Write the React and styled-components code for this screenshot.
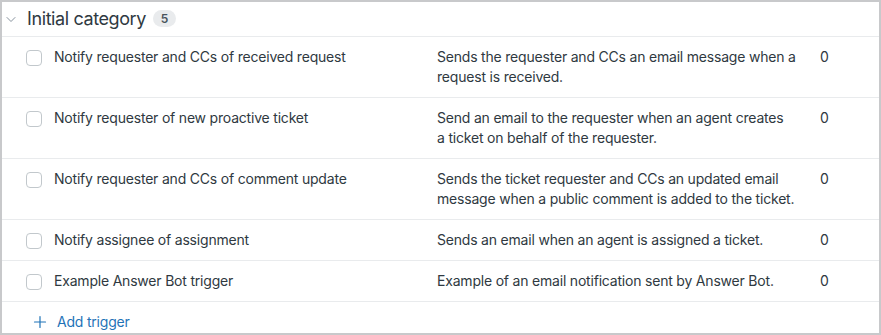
import React from "react";
import styled, { createGlobalStyle } from "styled-components";

const Global = createGlobalStyle`
  html, body { margin: 0; padding: 0; background: #fff; }
  body { font-family: Inter, "Noto Sans", sans-serif; color: #2f3941; }
  * { box-sizing: border-box; }
`;

const Frame = styled.div`
  width: 881px;
  height: 335px;
  border: 2px solid #c8c9cb;
  background: #fff;
  overflow: hidden;
`;

const Header = styled.div`
  display: flex;
  align-items: center;
  height: 35px;
  padding-left: 2px;
  padding-bottom: 1px;
  border-bottom: 1px solid #e9ebed;
`;

const Chevron = styled.svg`
  width: 12px;
  height: 12px;
  margin-right: 11px;
  margin-top: 1px;
  color: #87929d;
`;

const Title = styled.h2`
  margin: 0;
  font-size: 18px;
  font-weight: 400;
  letter-spacing: -0.4px;
  line-height: 24px;
  color: #2f3941;
`;

const Badge = styled.span`
  margin-left: 7px;
  width: 23px;
  height: 17px;
  border-radius: 9px;
  background: #e9ebed;
  color: #49545c;
  font-size: 12px;
  font-weight: 600;
  line-height: 17px;
  text-align: center;
`;

const Row = styled.div`
  display: grid;
  grid-template-columns: 28px 383px 383px 1fr;
  padding: 10px 0 10px 24px;
  border-bottom: 1px solid #e9ebed;
  font-size: 14px;
  letter-spacing: -0.2px;
  line-height: 20px;
`;

const Check = styled.span`
  width: 16px;
  height: 16px;
  margin-top: 3px;
  border: 1px solid #c2c8cc;
  border-radius: 4px;
  background: #fff;
`;

const Name = styled.div`
  padding-right: 20px;
`;

const Desc = styled.div`
  padding-right: 18px;
`;

const Count = styled.div``;

const AddRow = styled.button`
  display: flex;
  align-items: center;
  gap: 10px;
  height: 40px;
  padding: 0 0 0 31px;
  border: 0;
  background: none;
  color: #1f73b7;
  font-family: inherit;
  font-size: 14px;
  letter-spacing: -0.2px;
  line-height: 20px;
  cursor: pointer;
`;

const PlusIcon = styled.svg`
  width: 14px;
  height: 14px;
`;

const rows = [
  ["Notify requester and CCs of received request", "Sends the requester and CCs an email message when a request is received."],
  ["Notify requester of new proactive ticket", "Send an email to the requester when an agent creates a\u00a0ticket on behalf of the requester."],
  ["Notify requester and CCs of comment update", "Sends the ticket requester and CCs an updated email message when a public comment is added to the ticket."],
  ["Notify assignee of assignment", "Sends an email when an agent is assigned a ticket."],
  ["Example Answer Bot trigger", "Example of an email notification sent by Answer Bot."],
];

export default function App() {
  return (
    <>
      <Global />
      <Frame>
        <Header>
          <Chevron viewBox="0 0 12 12" fill="none">
            <path d="M3 4.5l4 4 4-4" stroke="currentColor" strokeWidth="1" strokeLinecap="round" strokeLinejoin="round" />
          </Chevron>
          <Title>Initial category</Title>
          <Badge>5</Badge>
        </Header>
        {rows.map(([name, desc]) => (
          <Row key={name}>
            <Check />
            <Name>{name}</Name>
            <Desc>{desc}</Desc>
            <Count>0</Count>
          </Row>
        ))}
        <AddRow>
          <PlusIcon viewBox="0 0 14 14" fill="none">
            <path d="M7 1.5v11M1.5 7h11" stroke="currentColor" strokeWidth="1.2" strokeLinecap="round" />
          </PlusIcon>
          Add trigger
        </AddRow>
      </Frame>
    </>
  );
}
